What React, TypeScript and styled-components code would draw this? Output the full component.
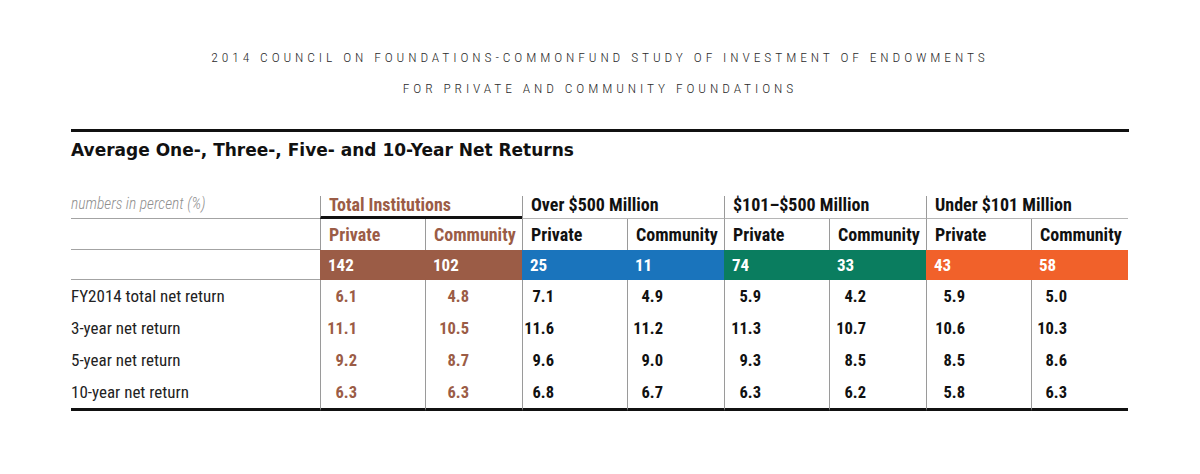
import React from 'react';
import styled, { createGlobalStyle } from 'styled-components';

const GlobalStyle = createGlobalStyle`
    html, body {
        margin: 0;
        padding: 0;
        background: #ffffff;
    }
    body {
        font-family: Roboto, "Liberation Sans", sans-serif;
        font-stretch: 75%;
        color: #1a1a1a;
    }
`

type Group = {
    name: string
    color: string
    textColor: string
    thickRule: boolean
    counts: [number, number]
    // where the numbers end, measured from the column's left edge
    valueEnds: [number, number]
}

const groups: Group[] = [
    { name: 'Total Institutions', color: '#9b5c46', textColor: '#9b5c46', thickRule: true, counts: [142, 102], valueEnds: [36, 43] },
    { name: 'Over $500 Million', color: '#1a74bc', textColor: '#111111', thickRule: false, counts: [25, 11], valueEnds: [31, 35] },
    { name: '$101–$500 Million', color: '#0a7d5f', textColor: '#111111', thickRule: false, counts: [74, 33], valueEnds: [36, 36] },
    { name: 'Under $101 Million', color: '#f1612a', textColor: '#111111', thickRule: false, counts: [43, 58], valueEnds: [38, 35] },
]

const rows: { label: string, values: string[] }[] = [
    { label: 'FY2014 total net return', values: ['6.1', '4.8', '7.1', '4.9', '5.9', '4.2', '5.9', '5.0'] },
    { label: '3-year net return', values: ['11.1', '10.5', '11.6', '11.2', '11.3', '10.7', '10.6', '10.3'] },
    { label: '5-year net return', values: ['9.2', '8.7', '9.6', '9.0', '9.3', '8.5', '8.5', '8.6'] },
    { label: '10-year net return', values: ['6.3', '6.3', '6.8', '6.7', '6.3', '6.2', '5.8', '6.3'] },
]

export default function App() {
    return (
        <>
            <GlobalStyle />
            <Page>
                <StudyHeading>
                    <div>2014 COUNCIL ON FOUNDATIONS-COMMONFUND STUDY OF INVESTMENT OF ENDOWMENTS</div>
                    <div>FOR PRIVATE AND COMMUNITY FOUNDATIONS</div>
                </StudyHeading>
                <Panel>
                    <Title>Average One-, Three-, Five- and 10-Year Net Returns</Title>
                    <Grid>
                        <Note>numbers in percent (%)</Note>
                        {groups.map(g => (
                            <GroupHead key={g.name} $color={g.textColor} $thick={g.thickRule}>
                                {g.name}
                            </GroupHead>
                        ))}

                        <BlankCell />
                        {groups.map(g => (
                            <React.Fragment key={g.name}>
                                <SubHead $color={g.textColor}>Private</SubHead>
                                <SubHead $color={g.textColor}>Community</SubHead>
                            </React.Fragment>
                        ))}

                        <BlankCell />
                        {groups.map(g => (
                            <React.Fragment key={g.name}>
                                <CountCell $bg={g.color}>{g.counts[0]}</CountCell>
                                <CountCell $bg={g.color}>{g.counts[1]}</CountCell>
                            </React.Fragment>
                        ))}

                        {rows.map((row, r) => (
                            <React.Fragment key={row.label}>
                                <RowLabel $last={r === rows.length - 1}>{row.label}</RowLabel>
                                {row.values.map((v, i) => {
                                    const g = groups[Math.floor(i / 2)]
                                    return (
                                        <ValueCell key={i} $color={g.textColor} $last={r === rows.length - 1}>
                                            <Value $end={g.valueEnds[i % 2]}>{v}</Value>
                                        </ValueCell>
                                    )
                                })}
                            </React.Fragment>
                        ))}
                    </Grid>
                </Panel>
            </Page>
        </>
    )
}

const Page = styled.div`
    width: 1058px;
    margin: 0 auto;
    padding-top: 48px;
`

const StudyHeading = styled.div`
    font-weight: 300;
    font-size: 13.5px;
    letter-spacing: 3.9px;
    color: #2a2a2a;
    text-align: center;
    display: flex;
    flex-direction: column;
    gap: 13px;
    line-height: 18px;
`

const Panel = styled.div`
    margin-top: 32px;
    border-top: 3px solid #111111;
`

const Title = styled.h2`
    margin: 0;
    padding-top: 8px;
    height: 60px;
    box-sizing: border-box;
    font-family: "DejaVu Sans", "Liberation Sans", sans-serif;
    font-stretch: normal;
    font-weight: bold;
    font-size: 17px;
    line-height: 20px;
    color: #111111;
`

const Grid = styled.div`
    display: grid;
    grid-template-columns: 249px repeat(4, 105px 97px);
    grid-template-rows: 27px 31px 30px repeat(3, 32px) 35px;
`

const Note = styled.div`
    border-bottom: 1px solid #a3a3a3;
    font-style: italic;
    font-weight: 300;
    font-size: 15.5px;
    color: #8f8f8f;
    display: flex;
    align-items: center;
    padding-bottom: 3px;
`

const GroupHead = styled.div<{ $color: string, $thick: boolean }>`
    grid-column: span 2;
    margin-top: 4px;
    border-left: 1px solid #9a9a9a;
    border-bottom: ${p => p.$thick ? '3px solid #111111' : '1px solid #b5b5b5'};
    color: ${p => p.$color};
    font-weight: bold;
    font-size: 18px;
    font-stretch: 80%;
    display: flex;
    align-items: center;
    padding: 0 0 ${p => p.$thick ? 3 : 5}px 8px;
`

const BlankCell = styled.div`
    border-bottom: 1px solid #a3a3a3;
`

const SubHead = styled.div<{ $color: string }>`
    border-left: 1px solid #9a9a9a;
    color: ${p => p.$color};
    font-weight: bold;
    font-size: 18px;
    font-stretch: 80%;
    display: flex;
    align-items: center;
    padding-left: 8px;
`

const CountCell = styled.div<{ $bg: string }>`
    background: ${p => p.$bg};
    color: #ffffff;
    font-weight: bold;
    font-size: 17px;
    display: flex;
    align-items: center;
    padding-left: 8px;
`

const RowLabel = styled.div<{ $last: boolean }>`
    font-size: 17px;
    color: #222222;
    display: flex;
    align-items: center;
    border-bottom: ${p => p.$last ? '3px solid #111111' : 'none'};
`

const ValueCell = styled.div<{ $color: string, $last: boolean }>`
    border-left: 1px solid #9a9a9a;
    border-bottom: ${p => p.$last ? '3px solid #111111' : 'none'};
    color: ${p => p.$color};
    font-weight: bold;
    font-size: 16.5px;
    display: flex;
    align-items: center;
`

const Value = styled.span<{ $end: number }>`
    display: flex;
    justify-content: flex-end;
    width: ${p => p.$end}px;
    white-space: nowrap;
`
